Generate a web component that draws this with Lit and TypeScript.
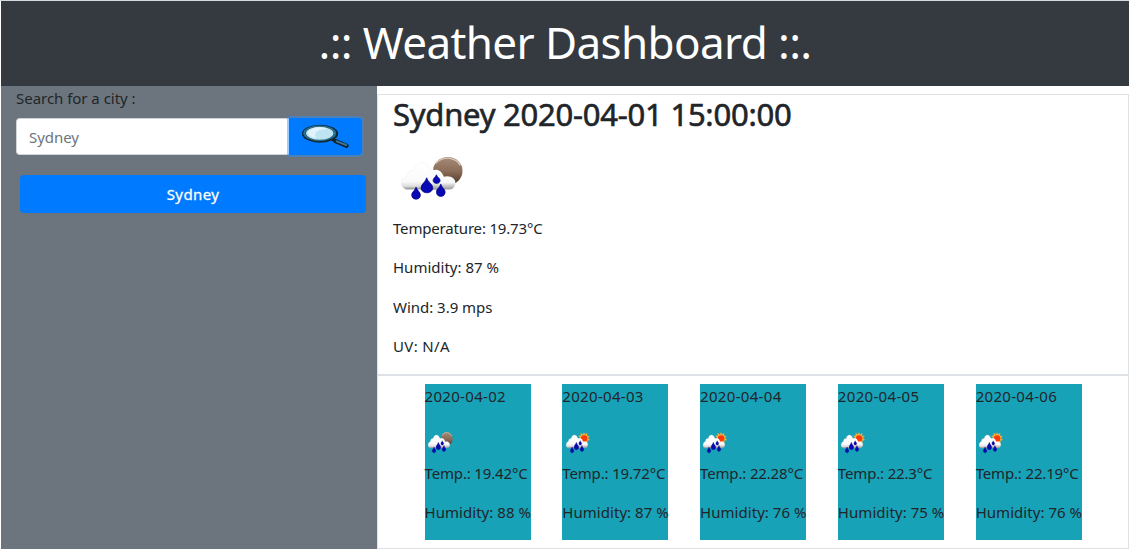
import { LitElement, html, css, svg } from "lit";
import { customElement, property } from "lit/decorators.js";

/** A single line of text whose tracking is adjusted to fill a given width. */
@customElement("fit-line")
class FitLine extends LitElement {
  @property({ type: Number }) width = 0;
  @property() text = "";

  static styles = css`
    :host { display: block; white-space: nowrap; }
    .text { display: inline-block; font-kerning: normal; font-variant-ligatures: none; }
  `;

  updated() {
    const el = this.renderRoot.querySelector(".text") as HTMLElement;
    el.style.letterSpacing = "0px";
    const natural = el.getBoundingClientRect().width;
    el.style.letterSpacing = (this.width - natural) / this.text.length + "px";
  }

  render() {
    return html`<span class="text">${this.text}</span>`;
  }
}

@customElement("weather-icon")
class WeatherIcon extends LitElement {
  @property() kind = "night";

  static styles = css`
    :host { display: block; }
    svg { display: block; width: 100%; height: 100%; overflow: visible; }
  `;

  render() {
    const moon = svg`<ellipse cx="173" cy="77" rx="44" ry="42" fill="url(#moon)"/>
      <path d="M137 54Q155 36 180 39Q201 43 210 60" fill="none" stroke="#d8c6b8" stroke-width="4"/>`;
    const sun = svg`<path d="M167 35l8 15 17-10-2 17 20 2-13 12 15 13-20 4 2 17-18-7-9 14-9-14-19 6 3-17-20-5 15-12-14-12 20-2-2-16 18 10z" fill="#f5b03c"/>
      <ellipse cx="168" cy="75" rx="24" ry="20" fill="#ff3a0a"/>`;
    return html`<svg viewBox="33 35 184 127" preserveAspectRatio="none">
      <defs>
        <linearGradient id="moon" x1="0" y1="0" x2="0" y2="1">
          <stop offset="0" stop-color="#a58b79"/><stop offset=".5" stop-color="#8b6d58"/><stop offset="1" stop-color="#4b3424"/>
        </linearGradient>
        <linearGradient id="cloud" x1="0" y1="0" x2="0" y2="1">
          <stop offset="0" stop-color="#fff"/><stop offset=".7" stop-color="#fafafa"/><stop offset=".88" stop-color="#dcdcdc"/><stop offset="1" stop-color="#8a8a8a"/>
        </linearGradient>
        <linearGradient id="front" x1="0" y1="0" x2="0" y2="1">
          <stop offset="0" stop-color="#fff"/><stop offset=".65" stop-color="#f6f6f6"/><stop offset="1" stop-color="#999"/>
        </linearGradient>
      </defs>
      ${this.kind === "night" ? moon : sun}
      <path d="M48 132C28 126 30 97 51 92C53 78 62 72 71 76C77 44 113 47 121 73C143 74 153 91 150 110L145 132Z" fill="url(#cloud)" stroke="#e6e6e6" stroke-width="1"/>
      <path d="M108 132C94 119 100 101 116 98C115 70 151 61 161 94C177 88 201 98 195 117C192 128 186 132 177 132Z" fill="url(#front)"/>
      <g fill="#0808b4" stroke="#000078" stroke-width="2">
        <path d="M78 125C73 139 65 139 65 149C65 165 91 165 91 149C91 139 83 138 78 125Z"/>
        <path d="M110 97C105 112 93 116 93 127C93 147 128 147 128 127C128 116 114 111 110 97Z"/>
        <path d="M139 88C136 96 129 98 129 105C129 117 150 117 150 105C150 98 142 97 139 88Z"/>
        <path d="M152 116C147 130 139 130 139 140C139 157 165 157 165 140C165 130 156 129 152 116Z"/>
      </g>
    </svg>`;
  }
}

@customElement("app-root")
class AppRoot extends LitElement {
  details = [
    { text: "Temperature: 19.73°C", width: 149.5 },
    { text: "Humidity: 87 %", width: 106 },
    { text: "Wind: 3.9 mps", width: 99.5 },
    { text: "UV: N/A", width: 57 },
  ];

  days = [
    { date: "2020-04-02", icon: "night", temp: "19.42°C", humidity: 88, width: 103 },
    { date: "2020-04-03", icon: "day", temp: "19.72°C", humidity: 87, width: 103 },
    { date: "2020-04-04", icon: "day", temp: "22.28°C", humidity: 76, width: 103 },
    { date: "2020-04-05", icon: "day", temp: "22.3°C", humidity: 75, width: 94.5 },
    { date: "2020-04-06", icon: "day", temp: "22.19°C", humidity: 76, width: 103 },
  ];

  static styles = css`
    * { box-sizing: border-box; }
    :host {
      box-sizing: border-box; display: flex; flex-direction: column; height: 549px;
      padding-left: 1px; border-top: 1px solid #d5dadd; background: #fff; overflow: hidden;
      font: 15px/24px "Noto Sans", "Open Sans", sans-serif; color: #212529;
    }
    .header {
      flex: none; height: 85px; padding-top: 14.5px; background: #343a40; color: #fff;
      display: flex; justify-content: center; font-size: 44px; line-height: 53px;
    }
    .body { flex: 1; display: flex; min-height: 0; }
    .side { flex: none; width: 376px; padding: 0 11px 0 15px; background: #6c757d; }
    .search { display: flex; height: 37px; margin: 8px 4px 20px 0; }
    .field {
      flex: 1; padding: 6px 0 0 12px; background: #fff; color: #6c757d;
      border: 1px solid #ced4da; border-right: 0; border-radius: 4px 0 0 4px;
    }
    .go {
      width: 73px; display: flex; align-items: center; justify-content: center;
      background: #007bff; border-radius: 0 4px 4px 0; box-shadow: 0 0 0 2px rgba(38, 143, 255, .45);
    }
    .glass { width: 48.5px; height: 24px; margin: -2px 0 0 -1px; }
    .city {
      height: 38px; margin-left: 4px; padding-top: 7px; display: flex; justify-content: center;
      background: #007bff; border-radius: 4px; color: #fff; -webkit-text-stroke: .3px #fff;
    }
    .main { flex: 1; display: flex; flex-direction: column; padding-top: 8px; }
    .current { height: 281px; padding-left: 15px; border: 1px solid #dee2e6; }
    .name { font-size: 31px; line-height: 39px; -webkit-text-stroke: .6px #212529; }
    .big { width: 61.5px; height: 42.5px; margin: 22.5px 0 16.5px 8px; }
    .detail { margin-bottom: 15.5px; }
    .forecast { flex: 1; display: flex; gap: 31.6px; padding: 8px 0 8px 46.5px; border: 1px solid #dee2e6; }
    .day { width: 106.2px; background: #17a2b8; }
    .small { width: 24.7px; height: 21px; margin: 23.5px 0 8px 3.3px; }
    .temp { margin-bottom: 15.5px; }
  `;

  render() {
    return html`
      <div class="header"><fit-line .width=${493} .text=${".:: Weather Dashboard ::."}></fit-line></div>
      <div class="body">
        <div class="side">
          <fit-line .width=${119.5} .text=${"Search for a city :"}></fit-line>
          <div class="search">
            <div class="field"><fit-line .width=${50} .text=${"Sydney"}></fit-line></div>
            <div class="go">
              <svg class="glass" viewBox="65 42 145 72" preserveAspectRatio="none">
                <path d="M158 89L174 97" stroke="#10222c" stroke-width="8"/>
                <path d="M169 94L201 107" stroke="#10222c" stroke-width="13" stroke-linecap="round"/>
                <path d="M172 94L200 105" stroke="#39779a" stroke-width="6" stroke-linecap="round"/>
                <ellipse cx="122" cy="71" rx="54" ry="27" fill="#0e2733"/>
                <ellipse cx="121" cy="70" rx="49" ry="23.5" fill="#287599"/>
                <ellipse cx="121" cy="70" rx="43" ry="20.5" fill="#1d4658"/>
                <ellipse cx="121" cy="70" rx="41" ry="19.5" fill="#bce4f3"/>
                <path d="M85 67Q93 54 119 52Q137 52 145 58Q120 56 109 68Q104 79 113 85Q85 81 85 67Z" fill="#e2f4fb"/>
              </svg>
            </div>
          </div>
          <div class="city"><fit-line .width=${52.5} .text=${"Sydney"}></fit-line></div>
        </div>
        <div class="main">
          <div class="current">
            <fit-line class="name" .width=${398.5} .text=${"Sydney 2020-04-01 15:00:00"}></fit-line>
            <weather-icon class="big" kind="night"></weather-icon>
            ${this.details.map((d) => html`<fit-line class="detail" .width=${d.width} .text=${d.text}></fit-line>`)}
          </div>
          <div class="forecast">
            ${this.days.map((d) => html`<div class="day">
              <fit-line .width=${81.5} .text=${d.date}></fit-line>
              <weather-icon class="small" kind=${d.icon}></weather-icon>
              <fit-line class="temp" .width=${d.width} .text=${"Temp.: " + d.temp}></fit-line>
              <fit-line .width=${106.5} .text=${`Humidity: ${d.humidity} %`}></fit-line>
            </div>`)}
          </div>
        </div>
      </div>
    `;
  }
}
